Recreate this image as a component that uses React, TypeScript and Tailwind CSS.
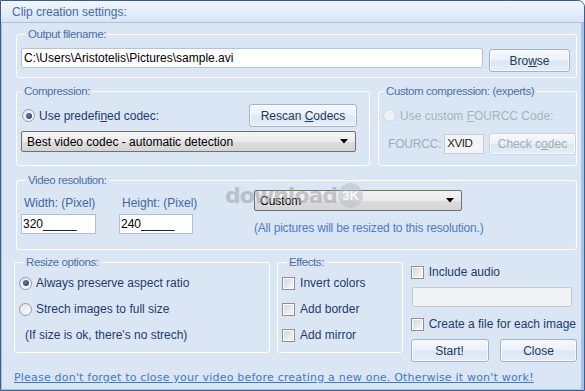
import React from 'react';

const ui = { fontFamily: '"Liberation Sans", Arial, sans-serif' };

function Group({ title, className, children }: { title: string; className?: string; children?: React.ReactNode }) {
    return (
        <fieldset className={'border border-white rounded-[3px] min-w-0 ' + (className || '')}>
            <legend className="ml-[5px] px-[2px] text-[11.5px] leading-[13px] tracking-[-0.4px] whitespace-nowrap text-[#4d6fa3]">{title}</legend>
            {children}
        </fieldset>
    );
}

function Btn({ children, className, disabled }: { children: React.ReactNode; className?: string; disabled?: boolean }) {
    return (
        <button
            className={
                'flex items-center justify-center rounded-[3px] border text-[12px] whitespace-nowrap shadow-[inset_0_0_0_1px_rgba(255,255,255,0.7)] bg-[linear-gradient(to_bottom,#f6f9fd_0%,#eaf1f9_48%,#dce7f4_52%,#e4ecf7_100%)] ' +
                (disabled ? 'border-[#c6d3e3] text-[#a2a9b1] ' : 'border-[#9fb3ce] text-[#1e395b] ') +
                (className || '')
            }
        >
            {children}
        </button>
    );
}

function Radio({ checked, disabled }: { checked?: boolean; disabled?: boolean }) {
    return (
        <span
            className={
                'flex items-center justify-center w-[13px] h-[13px] rounded-full border shrink-0 ' +
                (disabled
                    ? 'border-[#cdd5de] bg-[#eef2f6]'
                    : 'border-[#8d99a7] bg-[linear-gradient(135deg,#dfe3e8,#ffffff)]')
            }
        >
            {checked && <span className="w-[6px] h-[6px] rounded-full bg-[radial-gradient(circle_at_35%_35%,#5f7fae,#1c3766)]" />}
        </span>
    );
}

function Check() {
    return (
        <span className="w-[13px] h-[13px] border border-[#8e8f8f] bg-white p-[1px] shrink-0 block">
            <span className="block w-full h-full bg-[linear-gradient(135deg,#d6d9dd,#f4f5f6)]" />
        </span>
    );
}

function Select({ value, className }: { value: string; className?: string }) {
    return (
        <div
            className={
                'flex items-center justify-between border border-[#707070] rounded-[2px] bg-[linear-gradient(to_bottom,#f4f4f4_0%,#ebebeb_50%,#dddddd_51%,#d4d4d4_100%)] pl-[5px] pr-[7px] text-[12px] text-black whitespace-nowrap ' +
                (className || '')
            }
        >
            <span>{value}</span>
            <svg width="8" height="5" viewBox="0 0 8 5"><path d="M0 0h8L4 4.5z" fill="#000" /></svg>
        </div>
    );
}

export default function App() {
    return (
        <div style={ui} className="relative w-[585px] h-[391px] bg-[#dbe6f4] border border-[#3b5e92] rounded-tr-[7px] overflow-hidden shadow-[inset_0_0_0_1px_#a9c3e5,inset_-2px_0_0_1px_#a9c3e5] text-[#1c3b6c]">
            <div className="h-[22px] border-b border-[#a8c1e1] bg-[linear-gradient(to_bottom,#f1f6fc,#d9e5f4)] pl-[11px] text-[12px] leading-[22px] text-[#3f6bab]">
                Clip creation settings:
            </div>

            <div className="pl-[15px] pr-[7px]">
                <Group title="Output filename:" className="mt-[5px] pl-[4px] pr-[6px] pb-[5px]">
                    <div className="flex items-start">
                        <div className="mt-[7px] w-[462px] h-[20px] border border-[#b3c4da] rounded-[2px] bg-white pl-[2px] text-[12px] leading-[18px] text-black whitespace-nowrap">
                            C:\Users\Aristotelis\Pictures\sample.avi
                        </div>
                        <Btn className="ml-[6px] mt-[8px] w-[81px] h-[23px]">
                            <span>Bro<u>w</u>se</span>
                        </Btn>
                    </div>
                </Group>

                <div className="flex mt-[7px] gap-[8px]">
                    <Group title="Compression:" className="w-[354px] pb-[13px]">
                        <div className="flex items-center justify-between mt-[6px] h-[23px] pl-[5px] pr-[12px]">
                            <div className="flex items-center gap-[4px] text-[12px] whitespace-nowrap">
                                <Radio checked />
                                <span>Use predefi<u>n</u>ed codec:</span>
                            </div>
                            <Btn className="w-[108px] h-[23px]">
                                <span>Rescan <u>C</u>odecs</span>
                            </Btn>
                        </div>
                        <Select value="Best video codec - automatic detection" className="mt-[4px] ml-[4px] w-[335px] h-[21px]" />
                    </Group>

                    <Group title="Custom compression: (experts)" className="flex-1 pb-[8px]">
                        <div className="flex items-center gap-[4px] mt-[6px] h-[23px] pl-[4px] text-[12px] text-[#a9b1bb] whitespace-nowrap">
                            <Radio disabled />
                            <span>Use custom <u>F</u>OURCC Code:</span>
                        </div>
                        <div className="flex items-center mt-[6px] pl-[9px] text-[12px]">
                            <span className="text-[#a3abb5] tracking-[-0.2px]">FOURCC:</span>
                            <div className="ml-[3px] w-[40px] h-[20px] border border-[#c6ccd3] bg-[#f2f4f6] pl-[2px] text-[11.5px] leading-[16px] tracking-[-0.4px] text-[#222]">XVID</div>
                            <Btn disabled className="ml-[5px] w-[88px] h-[22px]">
                                <span>Check c<u>o</u>dec</span>
                            </Btn>
                        </div>
                    </Group>
                </div>

                <Group title="Video resolution:" className="mt-[8px] pl-[4px] pb-[14px]">
                    <div className="flex">
                        <div className="flex flex-col w-[75px] shrink-0">
                            <span className="mt-[9px] pl-[3px] text-[12px] leading-[14px] whitespace-nowrap text-[#3f66a3]">Width: (Pixel)</span>
                            <div className="mt-[4px] h-[20px] border border-[#a9bfdd] bg-white pl-[1px] text-[12px] leading-[18px] text-black">320_____</div>
                        </div>
                        <div className="flex flex-col w-[74px] ml-[23px] shrink-0">
                            <span className="mt-[9px] pl-[3px] text-[12px] leading-[14px] whitespace-nowrap text-[#3f66a3]">Height: (Pixel)</span>
                            <div className="mt-[4px] h-[20px] border border-[#a9bfdd] bg-white pl-[1px] text-[12px] leading-[18px] text-black">240_____</div>
                        </div>
                        <div className="flex flex-col ml-[61px]">
                            <Select value="Custom" className="mt-[3px] w-[208px] h-[21px]" />
                            <span className="mt-[10px] text-[12px] leading-[14px] tracking-[-0.2px] whitespace-nowrap text-[#4a7cc7]">(All pictures will be resized to this resolution.)</span>
                        </div>
                    </div>
                </Group>

                <div className="flex items-start mt-[6px] ml-[-2px]">
                    <Group title="Resize options:" className="w-[257px] pl-[4px] pb-[4px]">
                        <div className="flex flex-col text-[12px] pt-[1px] whitespace-nowrap">
                            <div className="flex items-center gap-[4px] h-[26px]">
                                <Radio checked />
                                <span>Always preserve aspect ratio</span>
                            </div>
                            <div className="flex items-center gap-[4px] h-[26px]">
                                <Radio />
                                <span>Strech images to full size</span>
                            </div>
                            <div className="flex items-center h-[26px] pl-[6px]">(If size is ok, there's no strech)</div>
                        </div>
                    </Group>

                    <Group title="Effects:" className="ml-[7px] w-[126px] pl-[4px] pb-[4px]">
                        <div className="flex flex-col text-[12px] pt-[1px] whitespace-nowrap">
                            {['Invert colors', 'Add border', 'Add mirror'].map((t) => (
                                <div key={t} className="flex items-center gap-[5px] h-[26px]">
                                    <Check />
                                    <span>{t}</span>
                                </div>
                            ))}
                        </div>
                    </Group>

                    <div className="ml-[7px] flex flex-col text-[12px] w-[168px] pt-[3px] whitespace-nowrap">
                        <div className="flex items-center gap-[5px] h-[26px] pl-[1px]">
                            <Check />
                            <span>Include audio</span>
                        </div>
                        <div className="mt-[2px] ml-[2px] w-[160px] h-[20px] border border-[#c4c9cf] rounded-[2px] bg-[#f1f2f3]" />
                        <div className="flex items-center gap-[5px] h-[26px] mt-[4px] pl-[1px]">
                            <Check />
                            <span>Create a file for each image</span>
                        </div>
                        <div className="flex justify-between mt-[2px] pl-[1px]">
                            <Btn className="w-[78px] h-[23px]">Start!</Btn>
                            <Btn className="w-[77px] h-[23px]">Close</Btn>
                        </div>
                    </div>
                </div>

                <div
                    style={{ fontFamily: '"DejaVu Sans", Verdana, sans-serif' }}
                    className="mt-[9px] ml-[-2px] text-[11px] leading-[14px] tracking-[0.2px] whitespace-nowrap text-[#3b7ad0] underline"
                >
                    Please don't forget to close your video before creating a new one. Otherwise it won't work!
                </div>
            </div>

            <div className="absolute left-[224px] top-[182px] flex items-center gap-[1px] opacity-55 pointer-events-none">
                <span style={{ fontFamily: '"DejaVu Sans", sans-serif' }} className="text-[22px] font-bold leading-[24px] tracking-[-1px] text-[#9aa1a8]">
                    download
                </span>
                <span className="flex items-center justify-center w-[25px] h-[25px] rounded-full bg-[#b9bfc5] text-[13px] font-bold text-white">3K</span>
            </div>
        </div>
    );
}
